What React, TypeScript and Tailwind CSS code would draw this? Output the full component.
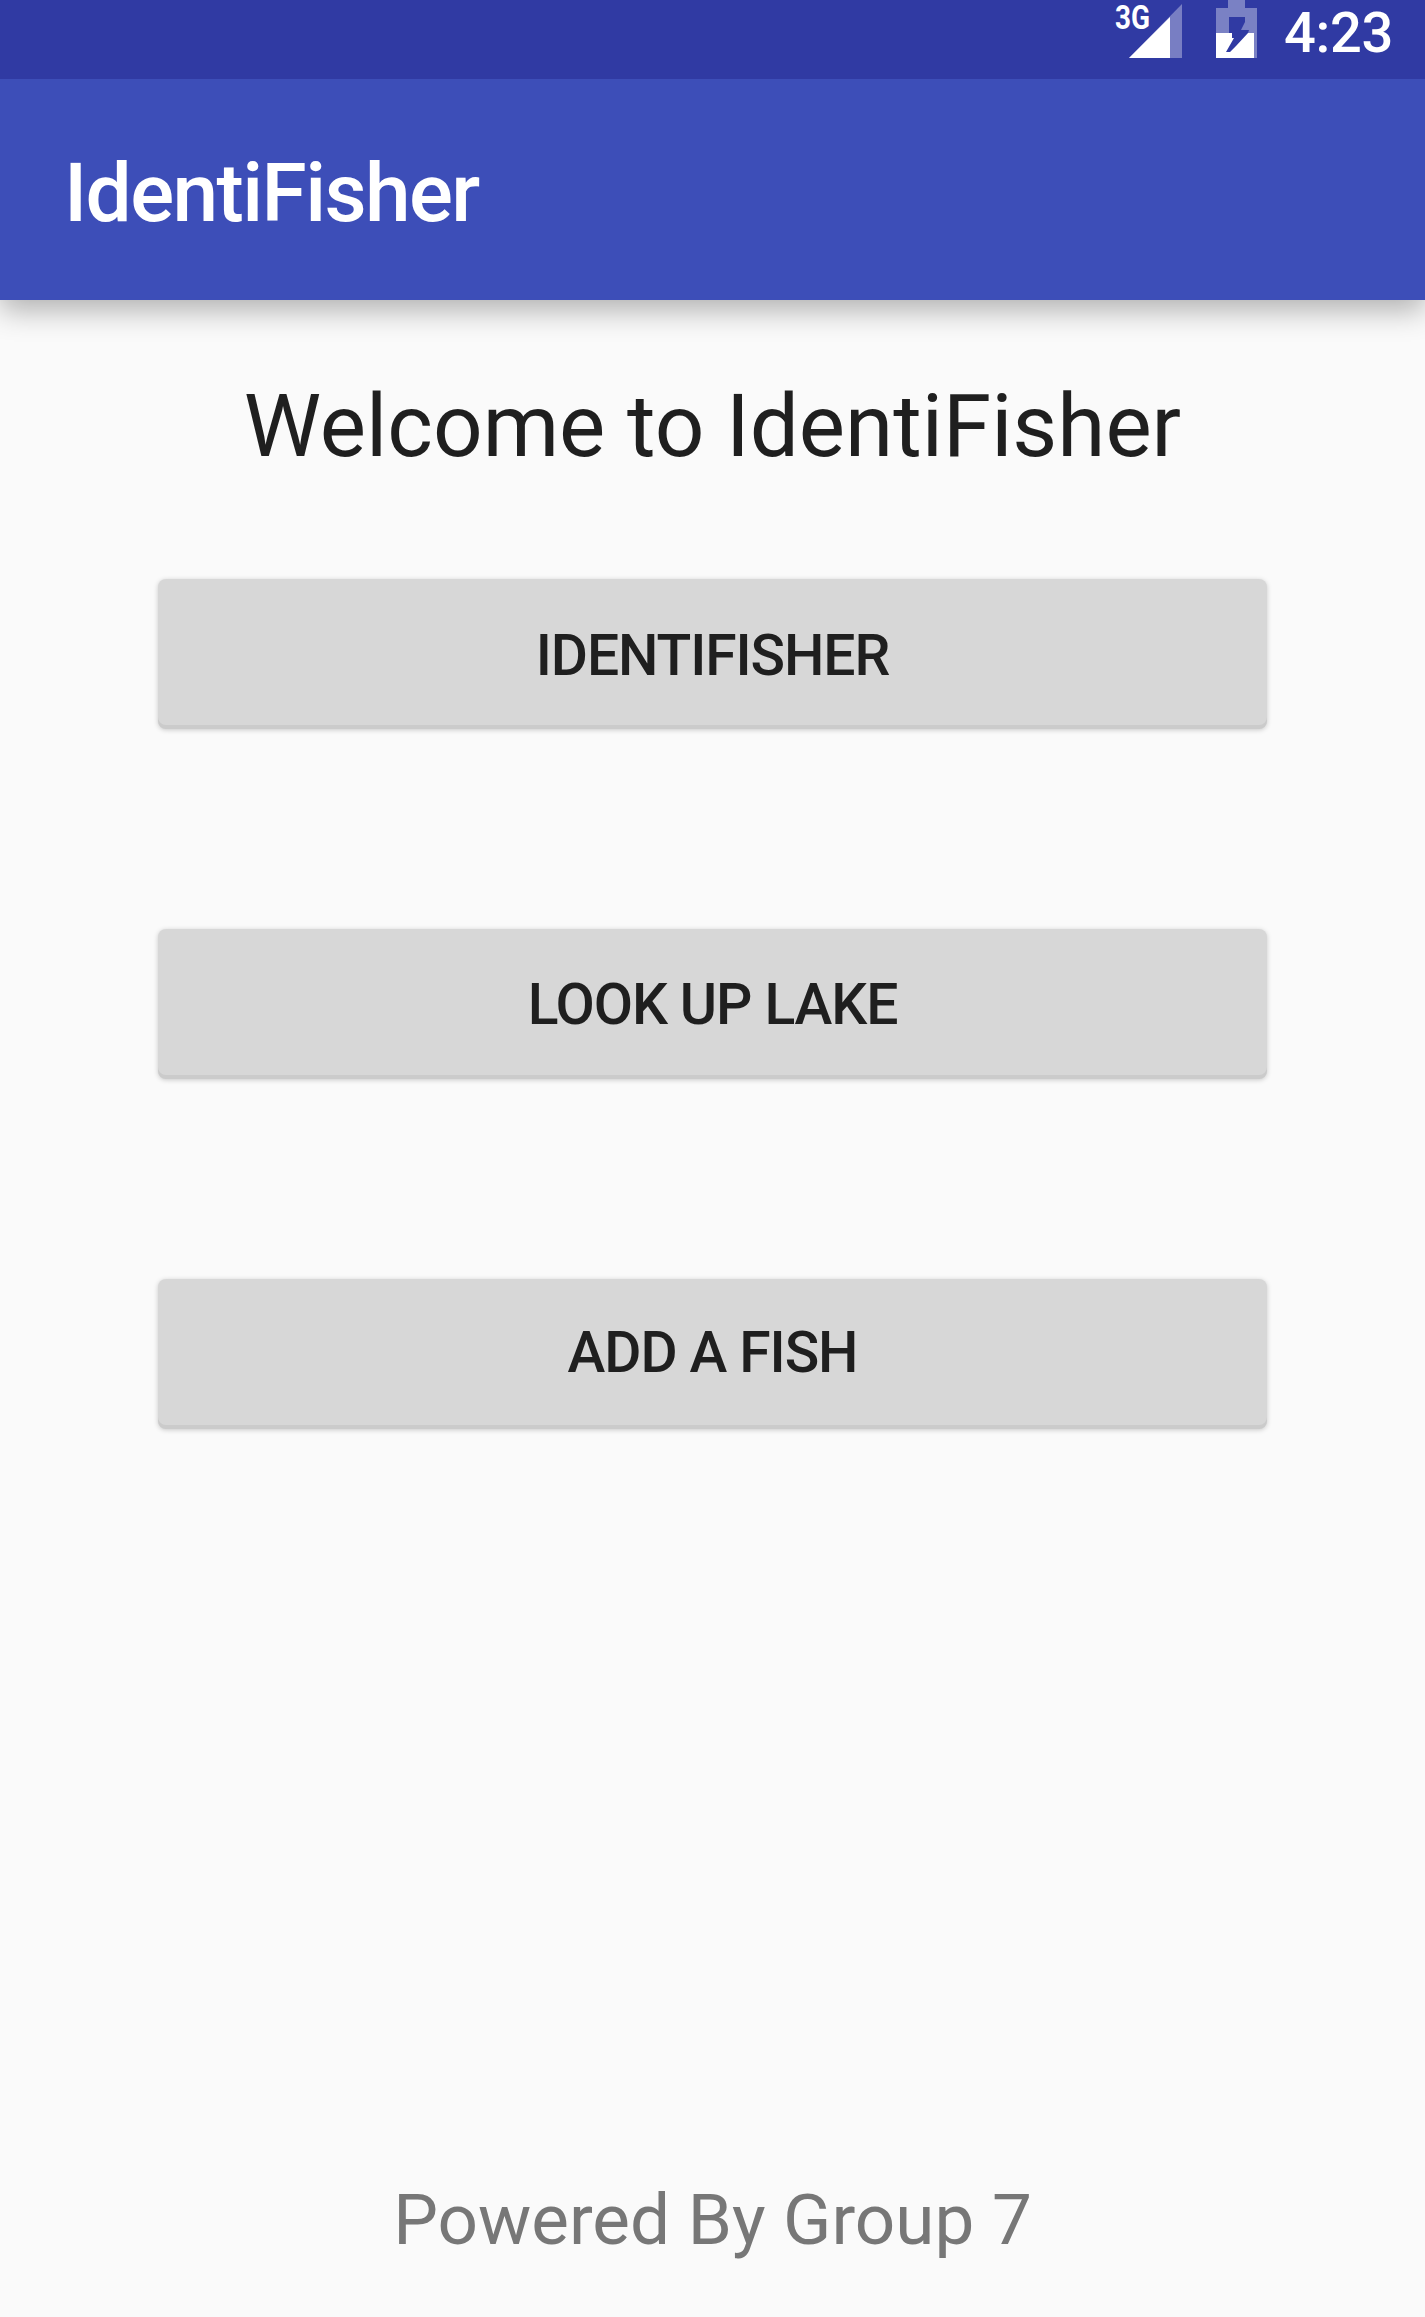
function StatusBar() {
  return (
    <div className="relative z-10 flex h-[79px] items-start justify-end bg-[#303aa3] pr-[32px] text-white">
      <div className="relative mr-[34px] h-[58px] w-[67px]">
        <svg className="h-full w-full" viewBox="0 0 67 58" fill="#fff">
          <path d="M14 58L67 4V58Z" opacity=".35" />
          <path d="M14 58L55 17V58Z" />
        </svg>
        <span className="absolute left-0 top-0 origin-left scale-x-[0.82] text-[34px] font-bold leading-[34px]">3G</span>
      </div>
      <svg className="mr-[27px] h-[59px] w-[41px]" viewBox="0 0 41 59" fill="#fff">
        <path fillRule="evenodd" d="M12 0H29V8H38V33H32L33 30H25L29 22V17H13V33H0V8H12Z" opacity=".36" />
        <path d="M0 33H16V38H18L14 45L10 52H14L20 46L32 33H38V58H0Z" />
        <path d="M38 8H41V58H38Z" opacity=".36" />
      </svg>
      <span className="text-[56px] font-medium leading-[66px] tracking-[-0.3px]">4:23</span>
    </div>
  );
}

function ActionButton({ label, lift }: { label: string; lift: string }) {
  return (
    <button className={`flex h-[150px] w-full items-center justify-center rounded-[8px] bg-[#d7d7d7] text-[57px] font-medium leading-none tracking-[-1.1px] text-[#1f1f1f] shadow-[0_1px_5px_rgba(0,0,0,0.2),inset_0_-4px_0_#cbcbcb] ${lift}`}>
      {label}
    </button>
  );
}

export default function App() {
  return (
    <div className="flex h-[2317px] w-[1425px] flex-col overflow-hidden bg-[#fafafa] font-['Roboto',sans-serif]">
      <StatusBar />
      <header className="flex h-[221px] items-center bg-[#3d4eb8] pl-[64px] pt-[6px] shadow-[0_10px_28px_rgba(0,0,0,0.3)]">
        <h1 className="text-[82px] font-medium leading-none tracking-[-1.6px] text-white">IdentiFisher</h1>
      </header>
      <main className="flex flex-1 flex-col items-center px-[158px]">
        <h2 className="mt-[76px] whitespace-nowrap text-[87.2px] leading-[100px] text-[#1f1f1f]">Welcome to IdentiFisher</h2>
        <div className="mt-[103px] flex w-full flex-col gap-[200px]">
          <ActionButton label="IDENTIFISHER" lift="pt-[2px]" />
          <ActionButton label="LOOK UP LAKE" lift="pt-0" />
          <ActionButton label="ADD A FISH" lift="pb-[3px]" />
        </div>
      </main>
      <footer className="mb-[57px] text-center text-[71px] leading-[80px] text-[#777777]">Powered By Group 7</footer>
    </div>
  );
}
